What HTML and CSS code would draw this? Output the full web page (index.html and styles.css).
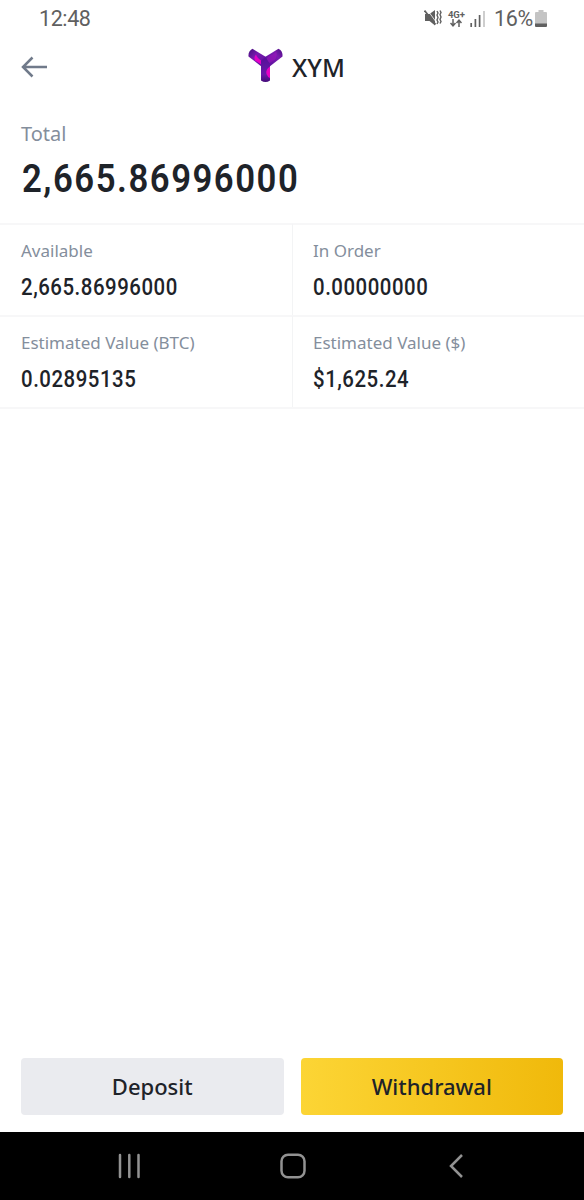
FILE: index.html
```html
<!DOCTYPE html>
<html lang="en">
  <head>
    <meta charset="UTF-8" />
    <meta name="viewport" content="width=device-width, initial-scale=1.0" />
    <title>XYM Wallet</title>
    <link rel="stylesheet" href="styles.css">
  </head>
  <body>
    <div class="screen">
      <div class="status-bar">
        <span class="time">12:48</span>
        <div class="status-icons">
          <svg class="mute" width="18" height="18" viewBox="0 0 18 18">
            <path d="M1 5h4.500L11 1v15.500L5.500 12H1z" fill="#606060" />
            <path d="M3 .5l9.500 13" stroke="#fff" stroke-width=".8" />
            <path d="M.5 1.500l11 14" stroke="#606060" stroke-width="1.800" />
            <path d="M13 2l1 2-1 2 1 2.500-1 2.500 1 2-1 2M16 1.500l1 2-1 2 1 2.500-1 2.500 1 2-1 2" fill="none" stroke="#606060" stroke-width="1.400" />
          </svg>
          <div class="network">
            <span>4G+</span>
            <svg width="12" height="8" viewBox="0 0 12 8">
              <path d="M3 0v6M.5 4L3 6.800 5.500 4M9 8V2M6.500 4L9 1.200 11.500 4" fill="none" stroke="#606060" stroke-width="1.500" />
            </svg>
          </div>
          <svg class="signal" width="16" height="17" viewBox="0 0 16 17">
            <path d="M1.200 13v4M5.400 9v8M9.600 5v12" stroke="#606060" stroke-width="1.700" />
            <path d="M14 1v16" stroke="#c6c6c6" stroke-width="1.700" />
          </svg>
          <span class="percent">16%</span>
          <svg class="battery" width="12" height="17" viewBox="0 0 12 17">
            <path d="M3.500 0h5v2H11q1 0 1 1v11H0V3q0-1 1-1h2.500z" fill="#c4c4c4" />
            <path d="M0 13.500h12V16q0 1-1 1H1q-1 0-1-1z" fill="#606060" />
          </svg>
        </div>
      </div>

      <div class="header">
        <svg class="back" width="27" height="22" viewBox="0 0 27 22">
          <path d="M26 11H2M11.500 1.500L2 11l9.500 9.500" fill="none" stroke="#707a8a" stroke-width="2.500" />
        </svg>
        <svg class="logo" width="35" height="35" viewBox="0 0 35 35">
          <defs>
            <linearGradient id="left" x1="0" y1="0" x2="1" y2="1">
              <stop offset="0" stop-color="#44107d" />
              <stop offset=".4" stop-color="#7a1bb0" />
              <stop offset="1" stop-color="#56109a" />
            </linearGradient>
            <linearGradient id="right" x1="1" y1="0" x2="0" y2="1">
              <stop offset="0" stop-color="#4c0e82" />
              <stop offset=".35" stop-color="#7a1bb0" />
              <stop offset="1" stop-color="#56109a" />
            </linearGradient>
            <linearGradient id="stem" x1="0" y1="0" x2="0" y2="1">
              <stop offset="0" stop-color="#560f98" />
              <stop offset=".7" stop-color="#6919a9" />
              <stop offset="1" stop-color="#440b79" />
            </linearGradient>
          </defs>
          <path d="M.5 8.500Q0 3 4.500.8L18 9v10h-4z" fill="url(#left)" />
          <path d="M7 12.500Q5.500 9 8 6.500q1 3.500 6 6.500v4z" fill="#e600c6" />
          <path d="M34.500 8.500Q35 3 30.500.8L17 9v10h4z" fill="url(#right)" />
          <path d="M28 2.300Q27.500 6 22 7.500 18.500 9 18 13l4 2 5-3.500Q30 8 28 2.300z" fill="#a414bd" opacity=".5" />
          <path d="M13 12.500l4.500-3.500 4.500 7v16.500q-4.500 3-9 0z" fill="url(#stem)" />
          <path d="M22 18.500Q17.500 21 18.500 26q1 3 3.500 4z" fill="#e800c5" />
        </svg>
        <span class="coin">XYM</span>
      </div>

      <div class="total">
        <div class="total-label">Total</div>
        <div class="total-value">2,665.86996000</div>
      </div>

      <div class="balances">
        <div class="balance">
          <div class="label">Available</div>
          <div class="value">2,665.86996000</div>
        </div>
        <div class="balance">
          <div class="label">In Order</div>
          <div class="value">0.00000000</div>
        </div>
        <div class="balance">
          <div class="label">Estimated Value (BTC)</div>
          <div class="value">0.02895135</div>
        </div>
        <div class="balance">
          <div class="label">Estimated Value ($)</div>
          <div class="value">$1,625.24</div>
        </div>
      </div>

      <div class="actions">
        <button class="btn deposit">Deposit</button>
        <button class="btn withdrawal">Withdrawal</button>
      </div>

      <div class="nav-bar">
        <svg width="24" height="26" viewBox="0 0 24 26">
          <path d="M3 2v22M12.300 2v22M21.500 2v22" stroke="#929292" stroke-width="2.500" stroke-linecap="round" />
        </svg>
        <svg width="26" height="26" viewBox="0 0 26 26">
          <rect x="1.500" y="1.700" width="23" height="22.600" rx="6.500" fill="none" stroke="#929292" stroke-width="2.500" />
        </svg>
        <svg class="nav-back" width="14" height="26" viewBox="0 0 14 26">
          <path d="M13 2L2 13l11 11" fill="none" stroke="#929292" stroke-width="2.500" />
        </svg>
      </div>
    </div>
  </body>
</html>
```
FILE: styles.css
```css
* {
  box-sizing: border-box;
}

body {
  margin: 0;
  background: #fff;
  font-family: Roboto, "Liberation Sans", sans-serif;
  color: #1e2329;
}

svg {
  display: block;
  flex-shrink: 0;
}

.screen {
  display: flex;
  flex-direction: column;
  width: 584px;
  height: 1200px;
}

.status-bar {
  display: flex;
  justify-content: space-between;
  height: 36px;
  padding: 0 37px 0 39px;
  font-size: 21.5px;
  line-height: 37px;
  color: #606060;
}

.time {
  letter-spacing: -0.4px;
}

.status-icons {
  display: flex;
  align-items: center;
}

.network {
  display: flex;
  flex-direction: column;
  align-items: center;
  margin: 0 5px 0 6px;
  font-size: 9.5px;
  font-weight: bold;
  line-height: 9px;
}

.percent {
  margin: 0 2px 0 8px;
  letter-spacing: -0.3px;
}

.header {
  display: grid;
  grid-template-columns: 27px 35px auto;
  align-items: center;
  height: 61px;
  padding-left: 21px;
}

.back {
  margin-bottom: 0;
}

.logo {
  margin-left: 200px;
  margin-bottom: 3px;
}

.coin {
  margin-left: 209px;
  font-family: "Noto Sans", sans-serif;
  font-size: 25px;
  font-weight: 500;
  line-height: 62px;
}

.total {
  height: 126px;
  padding: 24px 21px 0;
}

.total-label {
  font-family: "Noto Sans", sans-serif;
  font-size: 20px;
  line-height: 26px;
  color: #848e9c;
}

/* narrow digits with open spacing */
.total-value {
  font-size: 39.5px;
  font-weight: 600;
  line-height: 48px;
  margin: 8px 0 0 1px;
  letter-spacing: 1.7px;
  transform: scaleX(0.88);
  transform-origin: left;
}

.balances {
  display: grid;
  grid-template-columns: 292px 292px;
  grid-template-rows: 92px 92px;
  border-bottom: 2px solid #f7f7f8;
}

.balance {
  padding: 15px 21px 0;
  border-top: 2px solid #f7f7f8;
}

.balance:nth-child(even) {
  padding-left: 20px;
  border-left: 1px solid #f3f4f5;
}

.label {
  font-family: "Noto Sans", sans-serif;
  font-size: 17px;
  line-height: 22px;
  color: #848e9c;
}

.value {
  margin-top: 11px;
  font-size: 23.2px;
  font-weight: 500;
  line-height: 29px;
  letter-spacing: 0.6px;
  white-space: nowrap;
  transform: scaleX(0.88);
  transform-origin: left;
}

.actions {
  display: flex;
  gap: 17px;
  margin-top: auto;
  padding: 0 21px 17px;
}

.btn {
  flex: 1;
  height: 57px;
  padding-bottom: 3px;
  border: none;
  border-radius: 4px;
  font-family: "Noto Sans", sans-serif;
  font-size: 22px;
  font-weight: 500;
  color: #1e2329;
}

.deposit {
  background: #eaebef;
}

.withdrawal {
  background: linear-gradient(90deg, #fcd535, #f0b90b);
}

.nav-bar {
  display: flex;
  align-items: center;
  height: 68px;
  padding-left: 117px;
  gap: 139px;
  background: #000;
}

.nav-back {
  margin-left: 4px;
}
```
